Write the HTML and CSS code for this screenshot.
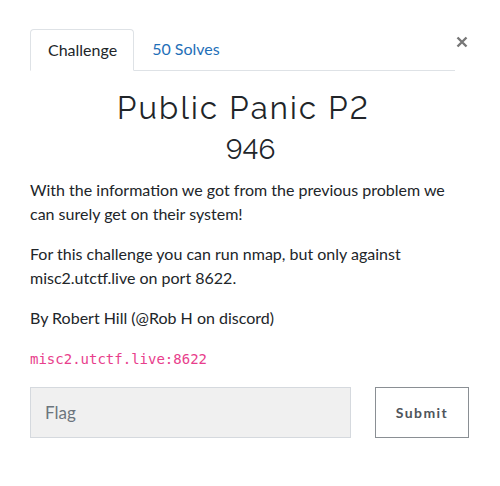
FILE: index.html
```html
<!DOCTYPE html>
<html>
<head>
<meta charset="utf-8">
<link rel="stylesheet" href="styles.css">
</head>
<body>
<div class="modal">
  <div class="close">
    <svg width="12" height="12" viewBox="0 0 12 12"><path d="M1.5 1.5 L10.5 10.5 M10.5 1.5 L1.5 10.5" stroke="#777" stroke-width="2.4" stroke-linecap="butt"/></svg>
  </div>
  <div class="tabs">
    <div class="tab active">Challenge</div>
    <div class="tab link">50 Solves</div>
  </div>
  <h1 class="title">Public Panic P2</h1>
  <h2 class="value">946</h2>
  <div class="desc">
    <p>With the information we got from the previous problem we can surely get on their system!</p>
    <p>For this challenge you can run nmap, but only against misc2.utctf.live on port 8622.</p>
    <p>By Robert Hill (@Rob H on discord)</p>
    <p><code>misc2.utctf.live:8622</code></p>
  </div>
  <div class="form">
    <div class="input">Flag</div>
    <div class="submit">Submit</div>
  </div>
</div>
</body>
</html>
```
FILE: styles.css
```css
html, body { margin: 0; padding: 0; background: #fff; }
body { font-family: Lato, "Open Sans", sans-serif; color: #212529; }
.modal { position: relative; padding: 29px 31px 0 30px; }
.close { position: absolute; left: 456px; top: 36px; width: 12px; height: 12px; }
.close svg { display: block; }
.tabs { display: flex; width: 425px; border-bottom: 1px solid #dee2e6; height: 41px; }
.tab { font-size: 16px; padding: 0 17px; line-height: 40px; }
.tab.active { border: 1px solid #dee2e6; border-bottom: 1px solid #fff; border-radius: 4px 4px 0 0; margin-bottom: -1px; padding: 0 16px 0 17px; height: 40px; color: #212529; }
.tab.link { color: #1f6fb8; padding-left: 18px; }
.title { font-family: Raleway, Inter, "Open Sans", sans-serif; font-weight: 400; font-size: 31px; letter-spacing: 2.2px; text-align: center; margin: 17px 0 0 0; line-height: 40px; padding-right: 12px; font-variant-numeric: lining-nums; }
.value { font-family: Raleway, Inter, "Open Sans", sans-serif; font-weight: 400; font-size: 28px; text-align: center; margin: 3px 0 0 0; line-height: 38px; padding-left: 2px; font-variant-numeric: lining-nums; }
.desc { font-size: 16px; line-height: 24px; margin-top: 9px; }
.desc p { margin: 0 0 16px 0; }
code { font-family: "DejaVu Sans Mono", "Liberation Mono", monospace; font-size: 14px; color: #e83e8c; }
.form { display: flex; gap: 24px; margin-top: 13px; }
.input { width: 305px; height: 49px; background: #f0f0f0; border: 1px solid #d5d9de; padding-left: 14px; font-size: 17px; line-height: 49px; color: #6c757d; }
.submit { width: 92px; height: 49px; border: 1px solid #8a8f94; text-align: center; line-height: 49px; font-size: 14px; font-weight: 700; letter-spacing: 1.4px; color: #4f555b; }
```
